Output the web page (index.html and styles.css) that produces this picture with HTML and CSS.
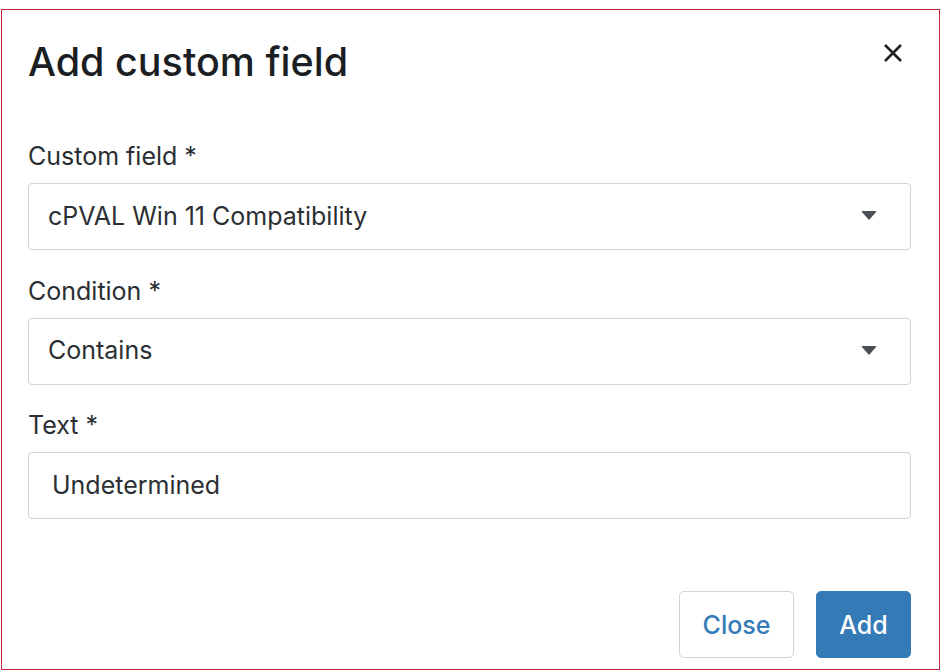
FILE: index.html
```html
<!DOCTYPE html>
<html lang="en">
<head>
<meta charset="utf-8">
<title>Add custom field</title>
<link rel="stylesheet" href="styles.css">
</head>
<body>
<div class="dialog">
  <div class="header">
    <h1 class="title">Add custom field</h1>
    <button class="close-x" aria-label="Close">
      <svg width="20" height="20" viewBox="0 0 20 20"><path d="M2 2 L18 18 M18 2 L2 18" stroke="#222" stroke-width="2.6" stroke-linecap="butt"/></svg>
    </button>
  </div>
  <div class="body">
    <div class="group">
      <div class="label">Custom field *</div>
      <div class="select"><span>cPVAL Win 11 Compatibility</span><span class="caret"></span></div>
    </div>
    <div class="group">
      <div class="label">Condition *</div>
      <div class="select"><span>Contains</span><span class="caret"></span></div>
    </div>
    <div class="group">
      <div class="label">Text *</div>
      <div class="input">Undetermined</div>
    </div>
  </div>
  <div class="footer">
    <button class="btn btn-default">Close</button>
    <button class="btn btn-primary">Add</button>
  </div>
</div>
</body>
</html>
```
FILE: styles.css
```css
html, body {
  margin: 0;
  padding: 0;
  background: #fff;
}
body {
  font-family: Inter, "Noto Sans", sans-serif;
  color: #212529;
}
.dialog {
  box-sizing: border-box;
  margin: 9px 0 0 1px;
  width: 939px;
  height: 661px;
  border: 1px solid #c4283c;
  padding: 0 28px 0 26px;
  display: flex;
  flex-direction: column;
}
.header {
  display: flex;
  justify-content: space-between;
  align-items: flex-start;
  padding-top: 28px;
}
.title {
  margin: 0;
  font-size: 39.5px;
  line-height: 48px;
  font-weight: 500;
  color: #1b1e22;
}
.close-x {
  border: 0;
  background: none;
  padding: 0;
  margin: 5px 8px 0 0;
  width: 20px;
  height: 20px;
  display: flex;
}
.body {
  padding-top: 54px;
  display: flex;
  flex-direction: column;
}
.group {
  display: flex;
  flex-direction: column;
}
.label {
  font-size: 25px;
  line-height: 32px;
  margin-bottom: 11px;
  color: #2b2f33;
}
.select, .input {
  box-sizing: border-box;
  height: 67px;
  border: 1px solid #ced4da;
  border-radius: 4px;
  display: flex;
  align-items: center;
  justify-content: space-between;
  font-size: 25px;
  color: #2b2f33;
  padding: 0 33px 2px 19px;
  margin-bottom: 24.5px;
}
.input {
  padding-left: 23px;
}
.caret {
  width: 0;
  height: 0;
  border-left: 8.5px solid transparent;
  border-right: 8.5px solid transparent;
  border-top: 9px solid #4a5056;
  border-radius: 2px;
}
.footer {
  margin-top: auto;
  margin-bottom: 11px;
  display: flex;
  justify-content: flex-end;
  gap: 22px;
}
.btn {
  box-sizing: border-box;
  height: 67px;
  font-family: Inter, "Noto Sans", sans-serif;
  font-size: 25px;
  font-weight: 500;
  border-radius: 5px;
  padding: 0;
  cursor: pointer;
}
.btn-default {
  background: #fff;
  border: 1px solid #ced4da;
  color: #337ab7;
  width: 115px;
}
.btn-primary {
  background: #337ab7;
  border: 1px solid #337ab7;
  color: #fff;
  width: 95px;
}
```
